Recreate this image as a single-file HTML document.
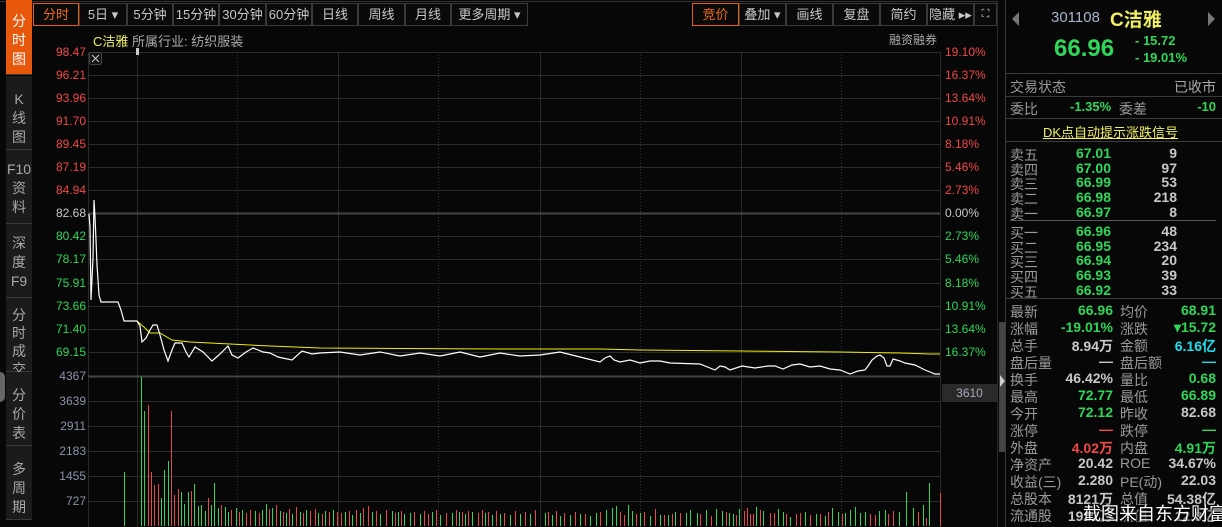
<!DOCTYPE html>
<html><head><meta charset="utf-8"><style>
*{margin:0;padding:0;box-sizing:border-box}
body{width:1222px;height:527px;background:#070707;overflow:hidden;position:relative;font-family:"Liberation Sans","Noto Sans CJK SC",sans-serif;color:#b0b0b0}
div{white-space:nowrap}
.a{position:absolute}
.tb{position:absolute;top:3px;height:23px;border:1px solid #3a3a3a;color:#c8c8c8;font-size:13px;line-height:21px;text-align:center;background:#0a0a0a}
.tb.on{border-color:#e8600e;color:#f26a1a}
.tab{position:absolute;left:6px;width:26px;background:#1b1b1b;border-bottom:1px solid #3a3a3a;color:#a8a8a8;font-size:14px;line-height:19px;text-align:center;padding-top:14px}
.pl{position:absolute;right:1136px;font-size:12px;font-family:"Liberation Sans",sans-serif}
.pr{position:absolute;left:945px;font-size:12px}
.r{color:#f04848}.g{color:#2fd65a}.w{color:#c8c8c8}.y{color:#f0f060}.c{color:#20e0f0}
.lab{position:absolute;left:1010px;font-size:14px;color:#9a9a9a}
.v1{position:absolute;right:109px;font-size:14px;font-weight:bold}
.l2{position:absolute;left:1120px;font-size:14px;color:#9a9a9a}
.v2{position:absolute;right:6px;font-size:14px;font-weight:bold}
.ob{position:absolute;right:111px;font-size:14px;font-weight:bold;color:#2fd65a}
.oq{position:absolute;right:45px;font-size:14px;font-weight:bold;color:#c8c8c8}
.hl{position:absolute;left:1006px;width:216px;height:1px;background:#3a3a3a}
</style></head><body>
<div class="a" style="left:0;top:1px;width:998px;height:1px;background:#333"></div>
<div class="tab" style="top:0;height:75px;background:#e8580c;color:#fff;padding-top:12px">分<br>时<br>图</div>
<div class="tab" style="top:76px;height:74px">K<br>线<br>图</div>
<div class="tab" style="top:150px;height:74px;padding-top:10px">F10<br>资<br>料</div>
<div class="tab" style="top:224px;height:74px;padding-top:10px">深<br>度<br>F9</div>
<div class="tab" style="top:298px;height:74px;padding-top:8px;line-height:18px">分<br>时<br>成<br>交</div>
<div class="tab" style="top:372px;height:74px">分<br>价<br>表</div>
<div class="tab" style="top:446px;height:74px">多<br>周<br>期</div>
<div class="a" style="left:0;top:372px;width:5px;height:30px;background:#666;border-radius:0 6px 6px 0"></div>
<div class="tb on" style="left:33px;width:46px">分时</div>
<div class="tb" style="left:79px;width:48px">5日 ▾</div>
<div class="tb" style="left:127px;width:46px">5分钟</div>
<div class="tb" style="left:173px;width:46px">15分钟</div>
<div class="tb" style="left:219px;width:47px">30分钟</div>
<div class="tb" style="left:266px;width:46px">60分钟</div>
<div class="tb" style="left:312px;width:46px">日线</div>
<div class="tb" style="left:358px;width:47px">周线</div>
<div class="tb" style="left:405px;width:46px">月线</div>
<div class="tb" style="left:451px;width:77px">更多周期 ▾</div>
<div class="tb on" style="left:692px;width:47px">竞价</div>
<div class="tb" style="left:739px;width:47px">叠加 ▾</div>
<div class="tb" style="left:786px;width:47px">画线</div>
<div class="tb" style="left:833px;width:47px">复盘</div>
<div class="tb" style="left:880px;width:47px">简约</div>
<div class="tb" style="left:927px;width:47px">隐藏 ▸▸</div>
<div class="tb" style="left:974px;width:23px;font-size:11px">⛶</div>
<div class="a" style="left:93px;top:31px;font-size:13px"><span class="y">C洁雅</span> <span style="color:#aaa">所属行业: 纺织服装</span></div>
<div class="a" style="left:889px;top:31px;font-size:12px;color:#aaa">融资融券</div>
<svg class="a" style="left:0;top:0" width="1000" height="527">
<g stroke="#2a2a2a" stroke-width="1">
<path d="M88 52.5H940M88 75.5H940M88 98.5H940M88 121.5H940M88 144.5H940M88 167.5H940M88 190.5H940M88 236.5H940M88 259.5H940M88 283.5H940M88 306.5H940M88 329.5H940M88 352.5H940M88 401.5H940M88 426.5H940M88 451.5H940M88 476.5H940M88 501.5H940"/>
<path d="M88.5 52V527M137.5 52V527M338.5 52V527M540.5 52V527M741.5 52V527M940.5 52V527"/>
</g>
<path d="M237.5 52V527M438.5 52V527M640.5 52V527M841.5 52V527" stroke="#333" stroke-dasharray="1 2"/>
<path d="M88 213.5H940M88 376.5H940" stroke="#444" stroke-width="2"/>
<rect x="89.5" y="52.5" width="12" height="12" rx="2" fill="#111" stroke="#444"/>
<path d="M92 55L99 62M99 55L92 62" stroke="#ccc"/>
<rect x="136" y="48" width="3" height="7" fill="#ccc"/>
<polyline fill="none" stroke="#f0f000" stroke-width="1" points="137,321 145,328 150,333 160,333 172,340 190,342 230,344 270,346 320,348 400,348.5 500,349 600,349 640,350 741,351 840,352 900,353 930,354 940,354"/>
<polyline fill="none" stroke="#fff" stroke-width="1.2" points="89,214 90,227 91,300 93,258 94,200 95,217 96,240 97,265 99,295 101,302 118,302 121,310 124,321 137,321 140,326 142,342 146,338 150,330 153,325 157,325 160,335 164,350 168,361 172,350 175,343 182,343 186,352 189,357 195,347 203,352 212,361 220,354 228,346 232,355 238,358 246,352 253,348 263,352 270,353 278,357 292,360 302,351 312,354 320,353 340,352 360,355 380,352 400,356 420,353 440,356 460,352 480,357 500,353 520,356 540,355 560,352 580,357 600,362 605,358 610,356 614,360 620,362 630,360 640,363 650,361 660,361 670,363 700,364 710,368 715,370 720,366 725,367 730,370 742,366 755,368 768,366 775,366 783,369 792,365 800,364 810,367 820,366 830,369 840,370 850,374 858,371 865,370 868,366 872,360 877,356 880,355 884,358 887,366 890,366 893,359 900,361 905,363 915,365 925,370 930,372 935,374 940,374"/>
<path stroke="#2fd65a" stroke-width="1" d="M124.5 526V472M141.5 526V377M144.5 526V411M161.5 526V498M164.5 526V470M168.5 526V461M181.5 526V492M184.5 526V504M188.5 526V492M194.5 526V484M198.5 526V506M201.5 526V505M205.5 526V511M211.5 526V505M214.5 526V483M218.5 526V508M225.5 526V507M228.5 526V512M236.5 526V508M242.5 526V510M255.5 526V511M262.5 526V510M266.5 526V504M272.5 526V508M280.5 526V511M286.5 526V513M292.5 526V514M300.5 526V512M306.5 526V510M318.5 526V513M325.5 526V511M333.5 526V510M345.5 526V512M352.5 526V515M360.5 526V513M372.5 526V512M380.5 526V514M392.5 526V511M398.5 526V512M404.5 526V514M410.5 526V513M420.5 526V514M432.5 526V512M440.5 526V515M452.5 526V513M459.5 526V512M465.5 526V514M472.5 526V512M485.5 526V513M492.5 526V515M500.5 526V514M510.5 526V515M520.5 526V514M530.5 526V514M545.5 526V513M552.5 526V515M560.5 526V516M570.5 526V515M580.5 526V514M590.5 526V516M596.5 526V513M606.5 526V510M612.5 526V508M616.5 526V506M628.5 526V505M632.5 526V511M640.5 526V513M650.5 526V516M660.5 526V515M668.5 526V515M675.5 526V512M686.5 526V513M690.5 526V510M697.5 526V513M706.5 526V510M716.5 526V509M722.5 526V511M729.5 526V513M733.5 526V514M739.5 526V509M756.5 526V507M763.5 526V511M778.5 526V509M783.5 526V512M790.5 526V517M805.5 526V512M816.5 526V514M825.5 526V516M832.5 526V508M838.5 526V512M845.5 526V513M850.5 526V510M855.5 526V507M860.5 526V513M865.5 526V512M879.5 526V511M885.5 526V510M899.5 526V512M906.5 526V492M913.5 526V508M923.5 526V505M929.5 526V483"/>
<path stroke="#e84848" stroke-width="1" d="M148.5 526V405M151.5 526V472M154.5 526V485M158.5 526V484M171.5 526V411M174.5 526V495M178.5 526V489M191.5 526V491M208.5 526V498M221.5 526V505M231.5 526V510M239.5 526V512M246.5 526V513M250.5 526V510M259.5 526V513M269.5 526V509M276.5 526V505M283.5 526V512M289.5 526V509M296.5 526V507M303.5 526V513M310.5 526V511M315.5 526V509M322.5 526V514M329.5 526V512M337.5 526V512M341.5 526V513M349.5 526V511M356.5 526V510M363.5 526V508M368.5 526V506M376.5 526V511M386.5 526V510M395.5 526V513M401.5 526V511M414.5 526V512M424.5 526V511M428.5 526V514M436.5 526V510M446.5 526V513M456.5 526V510M462.5 526V512M468.5 526V511M478.5 526V513M482.5 526V510M488.5 526V512M496.5 526V511M504.5 526V513M515.5 526V511M525.5 526V512M535.5 526V510M548.5 526V512M556.5 526V511M564.5 526V513M575.5 526V512M585.5 526V514M600.5 526V512M620.5 526V512M624.5 526V515M636.5 526V514M644.5 526V512M655.5 526V509M664.5 526V515M672.5 526V514M680.5 526V513M700.5 526V514M711.5 526V516M726.5 526V512M736.5 526V515M744.5 526V511M747.5 526V508M750.5 526V514M753.5 526V514M760.5 526V510M770.5 526V513M774.5 526V513M786.5 526V514M796.5 526V514M800.5 526V513M810.5 526V515M820.5 526V514M828.5 526V512M842.5 526V514M870.5 526V514M875.5 526V515M888.5 526V514M893.5 526V511M918.5 526V512M926.5 526V518M940.5 526V493"/>
</svg>
<div class="pl r" style="top:45px">98.47</div>
<div class="pl r" style="top:68px">96.21</div>
<div class="pl r" style="top:91px">93.96</div>
<div class="pl r" style="top:114px">91.70</div>
<div class="pl r" style="top:137px">89.45</div>
<div class="pl r" style="top:160px">87.19</div>
<div class="pl r" style="top:183px">84.94</div>
<div class="pl w" style="top:206px">82.68</div>
<div class="pl g" style="top:229px">80.42</div>
<div class="pl g" style="top:252px">78.17</div>
<div class="pl g" style="top:276px">75.91</div>
<div class="pl g" style="top:299px">73.66</div>
<div class="pl g" style="top:322px">71.40</div>
<div class="pl g" style="top:345px">69.15</div>
<div class="pl" style="top:369px;color:#8a94a8">4367</div>
<div class="pl" style="top:394px;color:#8a94a8">3639</div>
<div class="pl" style="top:419px;color:#8a94a8">2911</div>
<div class="pl" style="top:444px;color:#8a94a8">2183</div>
<div class="pl" style="top:469px;color:#8a94a8">1455</div>
<div class="pl" style="top:494px;color:#8a94a8">727</div>
<div class="pr r" style="top:45px">19.10%</div>
<div class="pr r" style="top:68px">16.37%</div>
<div class="pr r" style="top:91px">13.64%</div>
<div class="pr r" style="top:114px">10.91%</div>
<div class="pr r" style="top:137px">8.18%</div>
<div class="pr r" style="top:160px">5.46%</div>
<div class="pr r" style="top:183px">2.73%</div>
<div class="pr w" style="top:206px">0.00%</div>
<div class="pr g" style="top:229px">2.73%</div>
<div class="pr g" style="top:252px">5.46%</div>
<div class="pr g" style="top:276px">8.18%</div>
<div class="pr g" style="top:299px">10.91%</div>
<div class="pr g" style="top:322px">13.64%</div>
<div class="pr g" style="top:345px">16.37%</div>
<div class="a" style="left:942px;top:384px;width:55px;height:18px;background:#2a2a2a;color:#aab;font-size:12px;line-height:18px;text-align:center">3610</div>
<div class="a" style="left:997px;top:2px;width:1px;height:525px;background:#2a2a2a"></div>
<div class="a" style="left:999px;top:322px;width:6px;height:130px;background:#444"></div>
<div class="a" style="left:1000px;top:375px;width:0;height:0;border-left:5px solid #ccc;border-top:6px solid transparent;border-bottom:6px solid transparent"></div>
<div class="a" style="left:1005px;top:0;width:1px;height:527px;background:#3a3a3a"></div>
<div class="a" style="left:1012px;top:12px;border-right:7px solid #777;border-top:7px solid transparent;border-bottom:7px solid transparent"></div>
<div class="a" style="left:1208px;top:12px;border-left:7px solid #777;border-top:7px solid transparent;border-bottom:7px solid transparent"></div>
<div class="a" style="left:1051px;top:9px;font-size:15px;color:#aab4c8">301108</div>
<div class="a y" style="left:1110px;top:5px;font-size:19px;font-weight:bold">C洁雅</div>
<div class="a g" style="left:1054px;top:35px;font-size:24px;font-weight:bold">66.96</div>
<div class="a g" style="left:1135px;top:33px;font-size:13px;font-weight:bold">- 15.72</div>
<div class="a g" style="left:1135px;top:50px;font-size:13px;font-weight:bold">- 19.01%</div>
<div class="hl" style="top:73px"></div>
<div class="lab" style="top:77px">交易状态</div><div class="v2" style="top:77px;color:#aaa;font-weight:normal">已收市</div>
<div class="hl" style="top:96px"></div>
<div class="lab" style="top:99px">委比</div><div class="a g" style="left:1070px;top:99px;font-size:13px;font-weight:bold">-1.35%</div>
<div class="l2" style="left:1119px;top:99px">委差</div><div class="v2 g" style="top:99px;font-size:13px">-10</div>
<div class="hl" style="top:118px"></div>
<div class="a y" style="left:1043px;top:122px;font-size:13px;text-decoration:underline">DK点自动提示涨跌信号</div>
<div class="hl" style="top:141px"></div>
<div class="lab" style="top:145px">卖五</div><div class="ob" style="top:145px">67.01</div><div class="oq" style="top:145px">9</div>
<div class="lab" style="top:160px">卖四</div><div class="ob" style="top:160px">67.00</div><div class="oq" style="top:160px">97</div>
<div class="lab" style="top:174px">卖三</div><div class="ob" style="top:174px">66.99</div><div class="oq" style="top:174px">53</div>
<div class="lab" style="top:189px">卖二</div><div class="ob" style="top:189px">66.98</div><div class="oq" style="top:189px">218</div>
<div class="lab" style="top:204px">卖一</div><div class="ob" style="top:204px">66.97</div><div class="oq" style="top:204px">8</div>
<div class="a" style="left:1010px;top:220px;width:206px;height:1px;background:#555"></div>
<div class="lab" style="top:223px">买一</div><div class="ob" style="top:223px">66.96</div><div class="oq" style="top:223px">48</div>
<div class="lab" style="top:238px">买二</div><div class="ob" style="top:238px">66.95</div><div class="oq" style="top:238px">234</div>
<div class="lab" style="top:252px">买三</div><div class="ob" style="top:252px">66.94</div><div class="oq" style="top:252px">20</div>
<div class="lab" style="top:267px">买四</div><div class="ob" style="top:267px">66.93</div><div class="oq" style="top:267px">39</div>
<div class="lab" style="top:282px">买五</div><div class="ob" style="top:282px">66.92</div><div class="oq" style="top:282px">33</div>
<div class="hl" style="top:298px"></div>
<div class="lab" style="top:302px">最新</div><div class="v1 g" style="top:302px">66.96</div><div class="l2" style="top:302px">均价</div><div class="v2 g" style="top:302px">68.91</div>
<div class="lab" style="top:319px">涨幅</div><div class="v1 g" style="top:319px">-19.01%</div><div class="l2" style="top:319px">涨跌</div><div class="v2 g" style="top:319px">▾15.72</div>
<div class="lab" style="top:336px">总手</div><div class="v1 w" style="top:336px">8.94万</div><div class="l2" style="top:336px">金额</div><div class="v2 c" style="top:336px">6.16亿</div>
<div class="lab" style="top:353px">盘后量</div><div class="v1 w" style="top:353px">—</div><div class="l2" style="top:353px">盘后额</div><div class="v2 c" style="top:353px">—</div>
<div class="lab" style="top:370px">换手</div><div class="v1 w" style="top:370px">46.42%</div><div class="l2" style="top:370px">量比</div><div class="v2 g" style="top:370px">0.68</div>
<div class="lab" style="top:387px">最高</div><div class="v1 g" style="top:387px">72.77</div><div class="l2" style="top:387px">最低</div><div class="v2 g" style="top:387px">66.89</div>
<div class="lab" style="top:404px">今开</div><div class="v1 g" style="top:404px">72.12</div><div class="l2" style="top:404px">昨收</div><div class="v2 w" style="top:404px">82.68</div>
<div class="lab" style="top:421px">涨停</div><div class="v1 r" style="top:421px">—</div><div class="l2" style="top:421px">跌停</div><div class="v2 g" style="top:421px">—</div>
<div class="lab" style="top:438px">外盘</div><div class="v1 r" style="top:438px">4.02万</div><div class="l2" style="top:438px">内盘</div><div class="v2 g" style="top:438px">4.91万</div>
<div class="lab" style="top:455px">净资产</div><div class="v1 w" style="top:455px">20.42</div><div class="l2" style="top:455px">ROE</div><div class="v2 w" style="top:455px">34.67%</div>
<div class="lab" style="top:472px">收益(三)</div><div class="v1 w" style="top:472px">2.280</div><div class="l2" style="top:472px">PE(动)</div><div class="v2 w" style="top:472px">22.03</div>
<div class="lab" style="top:489px">总股本</div><div class="v1 w" style="top:489px">8121万</div><div class="l2" style="top:489px">总值</div><div class="v2 w" style="top:489px">54.38亿</div>
<div class="lab" style="top:506px">流通股</div><div class="v1 w" style="top:506px">1922万</div><div class="l2" style="top:506px">流值</div><div class="v2 w" style="top:506px">12.8亿</div>
<div class="a" style="left:1083px;top:500px;font-size:18px;color:#fff;text-shadow:0 0 3px #000,1px 1px 2px #000">截图来自东方财富</div>
</body></html>
